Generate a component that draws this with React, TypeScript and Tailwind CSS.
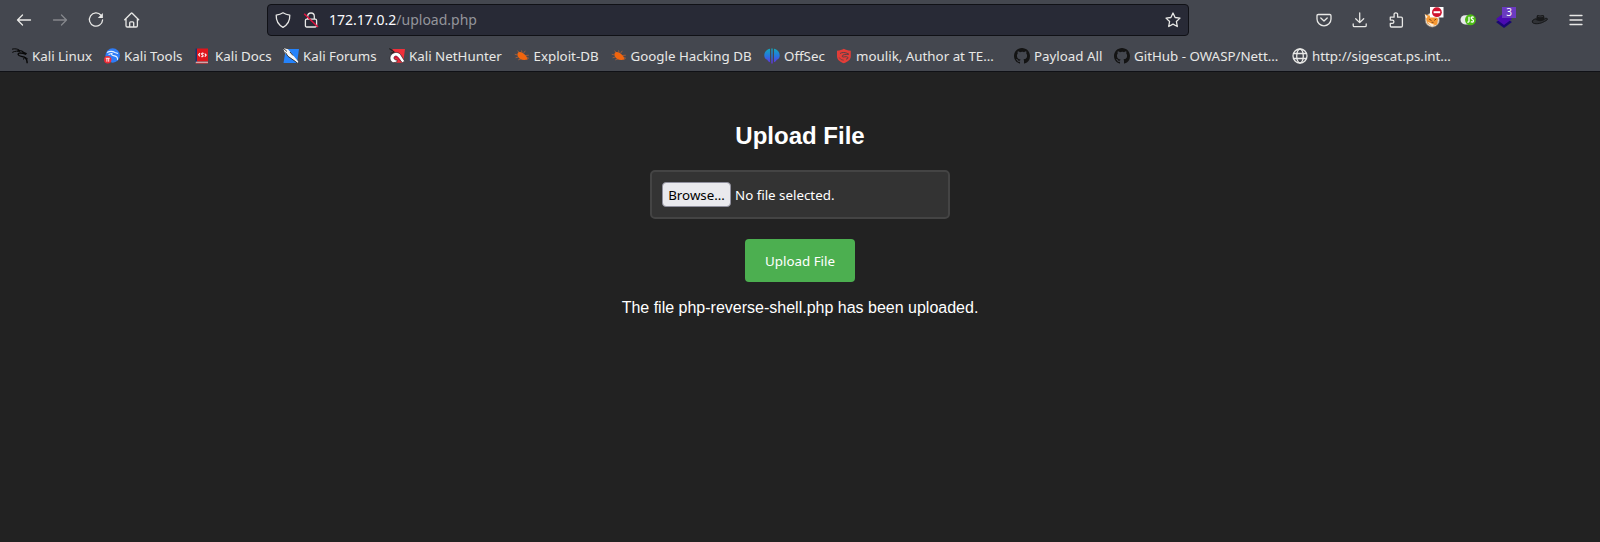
import type { ReactNode } from "react";

const line = {
  fill: "none",
  stroke: "currentColor",
  strokeWidth: 1.3,
  strokeLinecap: "round" as const,
  strokeLinejoin: "round" as const,
};

function Icon({ children }: { children: ReactNode }) {
  return (
    <svg viewBox="0 0 16 16" className="block size-4 shrink-0 overflow-visible">
      {children}
    </svg>
  );
}

function ToolButton({ children, className = "" }: { children: ReactNode; className?: string }) {
  return (
    <button className={`flex h-8 w-9 shrink-0 items-center justify-center ${className}`}>
      <Icon>{children}</Icon>
    </button>
  );
}

const KaliDragon = () => (
  <Icon>
    <path d="M0 1.2C3 .4 5.500.9 7.500 2.200M.3 4.400C3 2.900 6 2.900 8 3.800" stroke="#090909" strokeWidth="1" fill="none" />
    <path d="M5.500 2.800c3-.4 5.100.3 5.900 1.500l2.600 1.200-.5.700-2.500-.8C8 4.700 5.800 5 6.200 6.700c.5 2 4.200 1.300 6.600 2.800 2 1.300 2.400 3.300 2.400 5.800" stroke="#090909" strokeWidth="1.400" fill="none" />
    <path d="M12.500 9l3.300 2M12 10l-.5 1.500" stroke="#090909" fill="none" />
  </Icon>
);

const KaliTools = () => (
  <Icon>
    <circle cx="8.700" cy="7.500" r="7.200" fill="#2f7cf6" />
    <path d="M3 4.500c3-1.600 5.500-1.500 8 0l3 1M8.500 5.300c-2 .8-.4 2.300 2 2.600 2.200.4 3.200 2 3 4M4.500 6.500l3-1" stroke="#e8f2ff" strokeWidth="1.100" fill="none" />
    <circle cx="3.700" cy="11.800" r="3.700" fill="#ee2b35" />
    <path d="M1.800 10.300h3.900M2.900 10.500v3.200M4.700 10.500v3.200" stroke="#fff" strokeWidth=".9" />
  </Icon>
);

const KaliDocs = () => (
  <Icon>
    <path d="M.5.500h2V14h-2z" fill="#20306c" />
    <path d="M2 .5h11v13H2z" fill="#e0151c" />
    <path d="M.8 13.700H13v1.700H.8z" fill="#dcc9c9" />
    <path d="M.8 14.800H13v.8H.8z" fill="#b3181f" />
    <path d="M5 5.200L3.600 6.800 5 8.300M9.700 5.700l1.500 1.400-1.400 1.600M8.700 5.400c-2-.8-2.700.6-1.300 1.500s.7 2.400-1.100 1.700" stroke="#fff" strokeWidth="1.100" fill="none" />
  </Icon>
);

const KaliForums = () => (
  <Icon>
    <path d="M4 1h12l-2 14H.5L2 6z" fill="#2583fb" />
    <path d="M0 0l5 1.200 4.500 5.300 5.700 7-.3 2.200L11 12.500 4.800 8.200 2 5z" fill="#f7f7f7" />
    <path d="M0 0l4 3.500M4.800 8.200L2.500 4.500M4.800 8.200l6.200 4.300 4.200 3.200M7 4l3 3.500" stroke="#222" strokeWidth=".9" fill="none" />
  </Icon>
);

const NetHunter = () => (
  <Icon>
    <path d="M3.500 1L16 1l-1.800 13.800H4z" fill="#ef2f3a" />
    <path d="M4 14.700C.5 13 .2 9 2.500 6.500 5.500 3.500 9.500 4 11.500 6.500l4.200 6.700-2.400 1.500-4.500-5.500C7 7 4.800 8.500 5 10.200c.2 1.500 1.700 2 3.200 1.700l-.5 2.300z" fill="#fff" stroke="#292229" strokeWidth=".7" />
    <path d="M.3.500l5 3.500M1.500 5.200L5.500 4" stroke="#222" strokeWidth="1.100" />
    <path d="M5.500 9.800c1-2 3.200-1 5.300 2.500" fill="none" stroke="#c4153a" strokeWidth="1.300" />
  </Icon>
);

const Bug = () => (
  <Icon>
    <path d="M3.600 5.200C4.500 3.300 7 3.800 8.800 4.900c2.300 1.400 4 3.200 4.900 6.600-2.800.7-5.700.6-7.600-.6C4.200 9.600 2.900 7.300 3.600 5.200z" fill="#f2650e" />
    <path d="M5 4.400L3.500 2.600M8 4.500L7.500 2.400M9.500 5.300l1.800-2.500M11.500 7.500l3.300-.3M3.700 7L.8 6.300M4.500 9l-2.900.8M7 10.900l-2.800 1M12.500 9.500l2.500.8" stroke="#c26334" strokeWidth=".7" fill="none" />
  </Icon>
);

const OffSec = () => (
  <Icon>
    <defs>
      <linearGradient id="offsec" x1="0" y1="0" x2="0" y2="1">
        <stop offset="0" stopColor="#12a9bb" />
        <stop offset=".5" stopColor="#2676df" />
        <stop offset="1" stopColor="#6a2ee0" />
      </linearGradient>
    </defs>
    <path d="M6 .8v13.500C4.500 13.800 3.700 12.800 3.300 11.800 1.400 11.100.3 9.500.3 7.400.3 4.100 2.800 1.500 6 .8zM7.300.4h1.400v15.100H7.300zM10 .8v13.500c1.500-.5 2.300-1.500 2.700-2.500 1.900-.7 3-2.300 3-4.400C15.700 4.100 13.200 1.500 10 .8z" fill="url(#offsec)" />
  </Icon>
);

const RedShield = () => (
  <Icon>
    <path d="M1 2.700C4 2.600 6 1.800 7.800.7c2 1.100 4 1.900 7 2v5.500c0 3.500-3 5.600-7 7-4-1.400-6.800-3.500-6.800-7z" fill="#e33d38" />
    <path d="M4 5.500c2-1.300 4.300-1.300 7-.3l1.800 1-2.500.3C7.200 6.300 5.800 7.700 6.300 8.700c.9 1 4-.9 5.500.5.700 1-.3 1.900-1.800 1.900" stroke="#4b4146" strokeWidth=".9" fill="none" />
    <path d="M3.200 9.500l2 2.200 2.500.5" stroke="#4b4146" strokeWidth=".7" fill="none" />
  </Icon>
);

const GitHub = () => (
  <Icon>
    <path fill="#141414" d="M8 0C3.580 0 0 3.580 0 8c0 3.540 2.290 6.530 5.470 7.590.4.070.55-.17.55-.38v-1.490c-2.010.37-2.530-.49-2.690-.94-.09-.23-.48-.94-.82-1.130-.28-.15-.68-.52-.01-.53.63-.01 1.080.58 1.230.82.72 1.210 1.870.87 2.330.66.070-.52.280-.87.510-1.070-1.780-.2-3.640-.89-3.640-3.950 0-.87.310-1.590.82-2.150-.08-.2-.36-1.020.08-2.120 0 0 .67-.21 2.200.82A7.600 7.600 0 0 1 8 3.870c.68 0 1.360.09 2 .27 1.530-1.040 2.200-.82 2.200-.82.440 1.100.160 1.920.080 2.120.510.560.820 1.270.820 2.150 0 3.070-1.870 3.750-3.650 3.950.290.250.540.730.540 1.480v2.190c0 .210.150.460.550.380A8.010 8.010 0 0 0 16 8c0-4.420-3.580-8-8-8z" />
  </Icon>
);

const Globe = () => (
  <Icon>
    <g {...line} strokeWidth={1.3}>
      <circle cx="8" cy="8" r="7" />
      <ellipse cx="8" cy="8" rx="3.300" ry="7" />
      <path d="M1.500 5.500h13M1.500 10.500h13" />
    </g>
  </Icon>
);

const bookmarks = [
  { label: "Kali Linux", icon: <KaliDragon />, width: "w-[92px]" },
  { label: "Kali Tools", icon: <KaliTools />, width: "w-[91px]" },
  { label: "Kali Docs", icon: <KaliDocs />, width: "w-[88px]" },
  { label: "Kali Forums", icon: <KaliForums />, width: "w-[106px]" },
  { label: "Kali NetHunter", icon: <NetHunter />, width: "w-[124.5px]" },
  { label: "Exploit-DB", icon: <Bug />, width: "w-[97px]" },
  { label: "Google Hacking DB", icon: <Bug />, width: "w-[153.5px]" },
  { label: "OffSec", icon: <OffSec />, width: "w-[72px]" },
  { label: "moulik, Author at TE…", icon: <RedShield />, width: "w-[178px]" },
  { label: "Payload All", icon: <GitHub />, width: "w-[100px]" },
  { label: "GitHub - OWASP/Nett…", icon: <GitHub />, width: "w-[178px]" },
  { label: "http://sigescat.ps.int…", icon: <Globe />, width: "w-[170px]" },
];

function NavigationBar() {
  return (
    <div className="flex h-10 items-center pr-[6px] pl-[6px]">
      <ToolButton>
        <path d="M14.500 8H1.500M6.500 3L1.500 8l5 5" {...line} />
      </ToolButton>
      <ToolButton className="text-[#85878c]">
        <path d="M1.500 8h13M9.500 3l5 5-5 5" {...line} />
      </ToolButton>
      <ToolButton>
        <path d="M13 3.200A6.600 6.600 0 1 0 14.600 8" {...line} />
        <path d="M14.900 1v5H9.800z" fill="currentColor" />
      </ToolButton>
      <ToolButton>
        <path d="M.7 7.700L7.200 1.200q.5-.5 1 0L14.700 7.700M2 6.700v7q0 1.300 1.300 1.300h8.800q1.300 0 1.300-1.300v-7M5.700 14.800v-4q0-1 1-1h2q1 0 1 1v4" {...line} />
      </ToolButton>
      <div className="ml-[117px] flex h-8 w-[922px] items-center rounded-[4px] border border-[#101116] bg-[#282a36] pr-[7px] pl-[7px]">
        <Icon>
          <path d="M8 .8c2 1.300 4.200 2 6.800 2.300.2 5.800-2 9.700-6.800 12.300C3.200 12.800 1 8.900 1.200 3.100 3.800 2.800 6 2.100 8 .8z" {...line} />
        </Icon>
        <span className="ml-[12px]">
          <Icon>
            <path d="M4.700 7V4.300a3.300 3.300 0 0 1 6.600 0V7M3.700 7.200h8.600q1.300 0 1.300 1.300v5q0 1.500-1.300 1.500H3.700q-1.300 0-1.300-1.500v-5q0-1.300 1.300-1.300z" {...line} />
            <path d="M1.200 1.700l13.800 13.300" stroke="#e2123f" strokeWidth="1.500" />
          </Icon>
        </span>
        <span className="ml-[10px] text-[14px] leading-5 text-[#fbfbfe]">
          172.17.0.2<span className="text-[#94959b]">/upload.php</span>
        </span>
        <span className="ml-auto">
          <Icon>
            <path d="M8 1l2.100 4.500 4.900.6-3.600 3.400.9 5L8 12.100l-4.300 2.400.9-5L1 6.100l4.900-.6z" {...line} />
          </Icon>
        </span>
      </div>
      <div className="ml-auto flex">
        <ToolButton>
          <path d="M2.300 2.500h11.400q1.300 0 1.300 1.300V7a7 6.800 0 0 1-14 0V3.800q0-1.300 1.300-1.300zM4.800 6L8 9l3.200-3" {...line} />
        </ToolButton>
        <ToolButton>
          <path d="M7.700.8v9.700M3.700 6.800l4 3.800 4-3.800M1.200 12v1.500q0 1.200 1.200 1.200H13q1.200 0 1.200-1.200V12" {...line} />
        </ToolButton>
        <ToolButton>
          <path d="M2.300 5.200h3.800V3a1.800 1.800 0 1 1 3.500 0v2.200h3.600q1.200 0 1.200 1.200v7.400q0 1.200-1.200 1.200H3.500q-1.200 0-1.200-1.200v-2.500h2a1.600 1.600 0 0 0 0-3.200h-2z" {...line} />
        </ToolButton>
        <ToolButton>
          <circle cx="8.300" cy="8" r="7.200" fill="#e6dfd3" stroke="#736b64" strokeWidth=".6" />
          <path d="M1 2.200l4.700 1.500 5.800.5 2.500 2.700-.8 5.500L8 14.200l-4.800-3z" fill="#f69832" />
          <path d="M.7 2l3 2.700L1.900 7zM2.800 9.500l4 1.700 4 1.800-3 1.200z" fill="#fff1df" />
          <path d="M5.200 7.200l2.300 1.300M12.200 7l-2 1.400M7.500 10.300h2" stroke="#884616" strokeWidth="1" />
          <path d="M6-5h13.500V5.500H6z" fill="#fff" />
          <circle cx="12.900" cy=".2" r="4.900" fill="#d0132f" />
          <path d="M9.600-.8h6.600v2H9.600z" fill="#fff" />
        </ToolButton>
        <ToolButton>
          <rect x=".5" y="3.200" width="14" height="9.200" rx="4.600" fill="#e7e8ea" />
          <circle cx="10.500" cy="7.800" r="5.500" fill="#4bbb13" />
          <path d="M9 4.800v4.300q0 1.300-1.700 1M13.700 5.300q-2.500-.9-2.500.8c0 1.600 2.500 1 2.300 2.800-.2 1.400-1.700 1.300-2.700.8" stroke="#fff" strokeWidth="1.300" fill="none" />
        </ToolButton>
        <button className="relative flex h-8 w-9 shrink-0 items-center justify-center">
          <Icon>
            <path d="M0 10l8-4.500 8 4.500-8 6z" fill="#1a0873" />
            <path d="M0 7L8 1l8 6-8 6z" fill="#4b0bb1" />
          </Icon>
          <span className="absolute top-[3px] left-[16px] flex h-[11px] w-[14px] items-center justify-center bg-[#6b3bc0] text-[10px] leading-[11px] text-white">3</span>
        </button>
        <ToolButton>
          <path d="M4 6.800C1.500 7.300 0 8.500.3 10c.5 2.200 6.400 2.300 10.500.3 2.500-1.200 4.800-2.300 4.700-3.300-.1-.7-1.300-.8-2.500-.6" stroke="#111213" strokeWidth=".9" fill="#303236" />
          <path d="M4 8l.8-4q.2-1 1.200-.9l2 .3 2.500-.4q1.400-.1 1.600.9l.7 3.600C10.500 9.500 6.500 9.700 4 8z" fill="#191a1b" />
          <path d="M6 4.300c1.500.7 3.500.6 5 0" stroke="#3f4146" strokeWidth=".7" fill="none" />
        </ToolButton>
        <ToolButton>
          <path d="M2 3.500h12M2 8h12M2 12.500h12" {...line} />
        </ToolButton>
      </div>
    </div>
  );
}

function BookmarksBar() {
  return (
    <nav className="flex h-[31px] items-center pl-[12px] text-[13.333px] leading-5">
      {bookmarks.map((bookmark) => (
        <a key={bookmark.label} className={`flex shrink-0 items-center gap-1 whitespace-nowrap ${bookmark.width}`}>
          {bookmark.icon}
          <span>{bookmark.label}</span>
        </a>
      ))}
    </nav>
  );
}

export default function App() {
  return (
    <div className="flex h-[542px] w-[1600px] flex-col overflow-hidden bg-[#222222] font-['Noto_Sans',sans-serif]">
      <header className="h-[72px] shrink-0 border-b border-[#101116] bg-[#44474f] text-[#e8e8e6]">
        <NavigationBar />
        <BookmarksBar />
      </header>
      <main className="flex flex-col items-center pt-[50px] text-white">
        <h2 className="font-['Liberation_Sans',Arial,sans-serif] text-2xl leading-7 font-bold">Upload File</h2>
        <div className="mt-5 flex h-[49px] w-[300px] items-center rounded-[5px] border-2 border-[#444444] bg-[#333333] px-[10px] text-[13.333px]">
          <button className="h-[25px] w-[69px] rounded-[4px] border border-[#8f8f9d] bg-[#e9e9ed] leading-[18px] text-black">Browse…</button>
          <span className="ml-1 pt-[2px]">No file selected.</span>
        </div>
        <button className="mt-5 h-[43px] w-[110px] rounded-[4px] bg-[#4caf50] pt-[2px] text-[13.333px] text-white">Upload File</button>
        <p className="mt-[17px] font-['Liberation_Sans',Arial,sans-serif] text-base leading-[18px]">The file php-reverse-shell.php has been uploaded.</p>
      </main>
    </div>
  );
}
